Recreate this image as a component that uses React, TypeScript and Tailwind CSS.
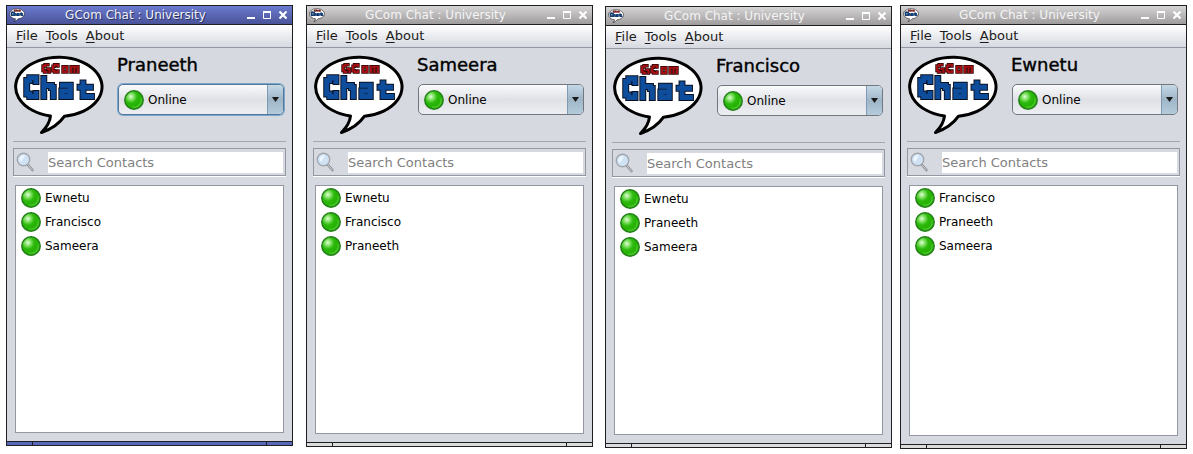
import { useId } from "react";

type Contact = string;

interface ChatWindowProps {
  user: string;
  contacts: Contact[];
  active?: boolean;
  className?: string;
  listClass: string;
}

const RED_WORD =
  "M35 10.800H32V12H30V16.500H31.500V18H33M34.500 15H36.500V18M45 12V10.800H41.500V12.300H40V16.800H41.500V18H45V17M50 12.800H54V18H50ZM58 18V12.800H65V18M61.500 13V18";
const BLUE_WORD =
  "M23 27.500V23.700H16.700V26.500H13.700V40H16.700V42.500H23V39.500M30.800 24.500V42.500M31 31.500H38.500V33.500H40.300V42.500M49.500 31.300H57.300V42.500H48.800V37H57M70 29V42.500H78.500M67 33.300H77.500";

function Bubble({ className }: { className: string }) {
  return (
    <svg viewBox="0 0 92 80" className={className} aria-hidden="true">
      <path
        d="M37.500 61.900A43.200 29.600 0 1 1 51.500 62.200C46.500 69.500 39 75 28.500 78.500C34 73 37 67.500 37.500 61.900Z"
        fill="#fff"
        stroke="#000"
        strokeWidth="3"
        strokeLinejoin="round"
      />
      <g fill="none" strokeLinecap="square">
        <path d={RED_WORD} stroke="#2a0505" strokeWidth="3.400" />
        <path d={RED_WORD} stroke="#a30f12" strokeWidth="2.100" />
        <path d={BLUE_WORD} stroke="#0b1020" strokeWidth="6.900" />
        <path d={BLUE_WORD} stroke="#0e4d9c" strokeWidth="5" />
      </g>
    </svg>
  );
}

function StatusBall() {
  const id = useId();
  return (
    <svg viewBox="0 0 20 20" className="size-5 shrink-0" aria-hidden="true">
      <defs>
        <radialGradient id={id} cx="0.33" cy="0.32" r="0.72">
          <stop offset="0" stopColor="#e4fcdc" />
          <stop offset="0.22" stopColor="#86e46a" />
          <stop offset="0.48" stopColor="#2cb90c" />
          <stop offset="0.8" stopColor="#22b000" />
          <stop offset="1" stopColor="#44c424" />
        </radialGradient>
      </defs>
      <circle cx="10" cy="10" r="9.200" fill={`url(#${id})`} stroke="#24801a" strokeWidth="1.500" />
      <path d="M16.800 8A7.300 7.300 0 0 1 8 16.900" fill="none" stroke="#7fe066" strokeWidth="1" opacity="0.5" />
    </svg>
  );
}

function Magnifier() {
  return (
    <svg viewBox="0 0 20 20" className="size-5 shrink-0" aria-hidden="true">
      <path d="M11.500 12.500L16.500 18" stroke="#8d8f94" strokeWidth="2.600" strokeLinecap="round" />
      <path d="M11.500 12.500L16.500 18" stroke="#d2d3d6" strokeWidth="1" strokeLinecap="round" />
      <circle cx="7.500" cy="7.500" r="6.200" fill="#cfe3f5" stroke="#a3a6ad" strokeWidth="1.400" />
      <path d="M3.500 8A4.200 4.200 0 0 1 9 3.600L5 10Z" fill="#eef6fd" />
    </svg>
  );
}

function TitleBar({ active }: { active: boolean }) {
  return (
    <header
      className={`flex h-[19px] items-center border-b border-[#1f1f22] pl-[2px] pr-1 ${
        active
          ? "bg-linear-to-b from-[#6b7bd0] to-[#4a5399] text-[#eef0fa] [text-shadow:1px_1px_0_#2d3260]"
          : "bg-linear-to-b from-[#d6d5d5] to-[#9f9c9d] text-[#f4f4f4]"
      }`}
    >
      <Bubble className="h-[14px] w-4 shrink-0" />
      <h1 className="flex-1 text-center text-xs leading-[18px]">GCom Chat : University</h1>
      <div className="flex items-center gap-[6px]">
        <button type="button" aria-label="Minimize" className="size-[10px]">
          <svg viewBox="0 0 10 10" className="size-[10px]"><path d="M1 8H9" stroke="#fff" strokeWidth="2" /></svg>
        </button>
        <button type="button" aria-label="Maximize" className="size-[10px]">
          <svg viewBox="0 0 10 10" className="size-[10px]"><path d="M1.500 1V8.500H8.500V1" fill="none" stroke="#fff" /><path d="M1 2H9" stroke="#fff" strokeWidth="2" /></svg>
        </button>
        <button type="button" aria-label="Close" className="size-[10px]">
          <svg viewBox="0 0 10 10" className="size-[10px]"><path d="M1.500 1.500L8.500 8.500M8.500 1.500L1.500 8.500" stroke="#fff" strokeWidth="2.200" /></svg>
        </button>
      </div>
    </header>
  );
}

function ChatWindow({ user, contacts, active = false, className = "", listClass }: ChatWindowProps) {
  return (
    <section className={`min-w-0 flex-1 border border-[#1f1f22] bg-[#d6d9e0] text-black ${className}`}>
      <TitleBar active={active} />
      <nav className="flex h-[23px] items-center gap-2 border-b border-[#9297a1] bg-linear-to-b from-white to-[#d6d9e0] pl-[9px] text-[13px] leading-4 text-[#1c1c20]">
        {["File", "Tools", "About"].map((item) => (
          <button key={item} type="button">
            <span className="underline underline-offset-2">{item[0]}</span>
            {item.slice(1)}
          </button>
        ))}
      </nav>
      <div className="px-[6px]">
        <div className="flex h-[94px] gap-3 border-b border-[#a3a7b0] pt-[6px]">
          <Bubble className="h-20 w-[92px] shrink-0" />
          <div className="min-w-0 flex-1">
            <h2 className="text-[18px] leading-[22px] [-webkit-text-stroke:0.4px_black]">{user}</h2>
            <div
              className={`mt-2 mr-[2px] ml-px flex h-[31px] items-center rounded-[5px] border bg-linear-to-b from-[#fbfbfc] via-[#dfe1e6] to-[#eceef2] ${
                active ? "border-[#54789a] ring-1 ring-[#7aa6cc]" : "border-[#72767f]"
              }`}
            >
              <span className="pl-[5px]"><StatusBall /></span>
              <select aria-label="Status" defaultValue="Online" className="min-w-0 flex-1 appearance-none bg-transparent pl-1 text-xs outline-none">
                <option>Online</option>
              </select>
              <span className="flex h-full w-4 items-center justify-center rounded-r-[4px] border-l border-[#7f9bb3] bg-linear-to-b from-[#c5d8e6] via-[#9fb6c8] to-[#b4cbdc]">
                <svg viewBox="0 0 7 5" className="h-[5px] w-[7px]"><path d="M0 0H7L3.500 5Z" fill="#1a1a1a" /></svg>
              </span>
            </div>
          </div>
        </div>
        <div className="mt-[6px] flex h-[28px] items-center border border-[#9297a1] pl-[2px] pr-[2px] shadow-[0_1px_0_#fff]">
          <Magnifier />
          <input
            type="search"
            aria-label="Search Contacts"
            placeholder="Search Contacts"
            className="ml-3 h-[21px] min-w-0 flex-1 bg-white text-[13px] outline-none placeholder:text-[#808080] placeholder:opacity-100"
          />
        </div>
        <ul className={`mx-[2px] mt-[9px] mb-2 border border-[#9297a1] bg-white pl-[5px] text-xs ${listClass}`}>
          {contacts.map((name) => (
            <li key={name} className="flex h-6 items-center gap-1">
              <StatusBall />
              {name}
            </li>
          ))}
        </ul>
      </div>
      <footer
        className={`flex h-1 justify-between border-t border-[#1f1f22] px-[25px] ${
          active ? "bg-[#5767b9]" : "bg-[#dcdcdc]"
        }`}
      >
        <span className="w-px bg-[#1f1f22]" />
        <span className="w-px bg-[#1f1f22]" />
      </footer>
    </section>
  );
}

export default function App() {
  return (
    <main className="flex items-start bg-white px-[6px] pt-[5px] font-['DejaVu_Sans',sans-serif]">
      <ChatWindow active user="Praneeth" contacts={["Ewnetu", "Francisco", "Sameera"]} listClass="min-h-[248px]" />
      <ChatWindow className="ml-[13px]" user="Sameera" contacts={["Ewnetu", "Francisco", "Praneeth"]} listClass="min-h-[249px]" />
      <ChatWindow className="mt-px ml-3" user="Francisco" contacts={["Ewnetu", "Praneeth", "Sameera"]} listClass="min-h-[249px]" />
      <ChatWindow className="ml-2" user="Ewnetu" contacts={["Francisco", "Praneeth", "Sameera"]} listClass="min-h-[251px]" />
    </main>
  );
}
